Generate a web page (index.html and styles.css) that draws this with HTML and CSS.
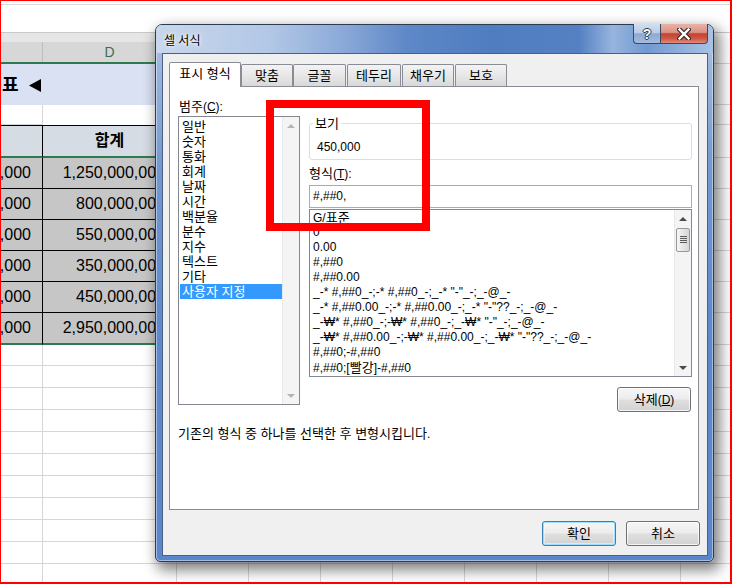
FILE: index.html
```html
<!DOCTYPE html>
<html lang="ko">
<head>
<meta charset="utf-8">
<title>셀 서식</title>
<link rel="stylesheet" href="styles.css">
</head>
<body>
<div class="screen">
  <div class="sheet">
    <div class="sheet-top"></div>
    <div class="sheet-gap"></div>
    <div class="row r-head">
      <div class="c hd"><div class="hd-in"></div></div>
      <div class="c hd"><div class="hd-in">D</div></div>
      <div class="c"></div><div class="c"></div><div class="c"></div><div class="c"></div><div class="c"></div><div class="c"></div><div class="c"></div><div class="c"></div>
    </div>
    <div class="row r-title">
      <div class="c ttl ttl-a"><span class="ttl-txt">표</span><svg class="ttl-arrow" width="12" height="13" viewBox="0 0 12 13"><path d="M0 6.5 L12 0 L12 13 Z" fill="#000"/></svg></div>
      <div class="c ttl"></div>
      <div class="c"></div><div class="c"></div><div class="c"></div><div class="c"></div><div class="c"></div><div class="c"></div><div class="c"></div><div class="c"></div>
    </div>
    <div class="row r-blank">
      <div class="c"></div><div class="c nb"></div>
      <div class="c"></div><div class="c"></div><div class="c"></div><div class="c"></div><div class="c"></div><div class="c"></div><div class="c"></div><div class="c"></div>
    </div>
    <div class="row r-th">
      <div class="c th th-a"></div>
      <div class="c th">합계</div>
      <div class="c"></div><div class="c"></div><div class="c"></div><div class="c"></div><div class="c"></div><div class="c"></div><div class="c"></div><div class="c"></div>
    </div>
    <div class="row r-data">
      <div class="c dv dv-a">300,000</div><div class="c dv">1,250,000,000</div>
      <div class="c"></div><div class="c"></div><div class="c"></div><div class="c"></div><div class="c"></div><div class="c"></div><div class="c"></div><div class="c"></div>
    </div>
    <div class="row r-data">
      <div class="c dv dv-a">200,000</div><div class="c dv">800,000,000</div>
      <div class="c"></div><div class="c"></div><div class="c"></div><div class="c"></div><div class="c"></div><div class="c"></div><div class="c"></div><div class="c"></div>
    </div>
    <div class="row r-data">
      <div class="c dv dv-a">150,000</div><div class="c dv">550,000,000</div>
      <div class="c"></div><div class="c"></div><div class="c"></div><div class="c"></div><div class="c"></div><div class="c"></div><div class="c"></div><div class="c"></div>
    </div>
    <div class="row r-data">
      <div class="c dv dv-a">100,000</div><div class="c dv">350,000,000</div>
      <div class="c"></div><div class="c"></div><div class="c"></div><div class="c"></div><div class="c"></div><div class="c"></div><div class="c"></div><div class="c"></div>
    </div>
    <div class="row r-data">
      <div class="c dv dv-a">120,000</div><div class="c dv">450,000,000</div>
      <div class="c"></div><div class="c"></div><div class="c"></div><div class="c"></div><div class="c"></div><div class="c"></div><div class="c"></div><div class="c"></div>
    </div>
    <div class="row r-data r-last">
      <div class="c dv dv-a">870,000</div><div class="c dv">2,950,000,000</div>
      <div class="c"></div><div class="c"></div><div class="c"></div><div class="c"></div><div class="c"></div><div class="c"></div><div class="c"></div><div class="c"></div>
    </div>
    <div class="row r-w r-w1"><div class="c"></div><div class="c"></div><div class="c"></div><div class="c"></div><div class="c"></div><div class="c"></div><div class="c"></div><div class="c"></div><div class="c"></div><div class="c"></div></div>
    <div class="row r-w"><div class="c"></div><div class="c"></div><div class="c"></div><div class="c"></div><div class="c"></div><div class="c"></div><div class="c"></div><div class="c"></div><div class="c"></div><div class="c"></div></div>
    <div class="row r-w"><div class="c"></div><div class="c"></div><div class="c"></div><div class="c"></div><div class="c"></div><div class="c"></div><div class="c"></div><div class="c"></div><div class="c"></div><div class="c"></div></div>
    <div class="row r-w"><div class="c"></div><div class="c"></div><div class="c"></div><div class="c"></div><div class="c"></div><div class="c"></div><div class="c"></div><div class="c"></div><div class="c"></div><div class="c"></div></div>
    <div class="row r-w"><div class="c"></div><div class="c"></div><div class="c"></div><div class="c"></div><div class="c"></div><div class="c"></div><div class="c"></div><div class="c"></div><div class="c"></div><div class="c"></div></div>
    <div class="row r-w"><div class="c"></div><div class="c"></div><div class="c"></div><div class="c"></div><div class="c"></div><div class="c"></div><div class="c"></div><div class="c"></div><div class="c"></div><div class="c"></div></div>
    <div class="row r-w"><div class="c"></div><div class="c"></div><div class="c"></div><div class="c"></div><div class="c"></div><div class="c"></div><div class="c"></div><div class="c"></div><div class="c"></div><div class="c"></div></div>
    <div class="row r-w"><div class="c"></div><div class="c"></div><div class="c"></div><div class="c"></div><div class="c"></div><div class="c"></div><div class="c"></div><div class="c"></div><div class="c"></div><div class="c"></div></div>
    <div class="row r-w"><div class="c"></div><div class="c"></div><div class="c"></div><div class="c"></div><div class="c"></div><div class="c"></div><div class="c"></div><div class="c"></div><div class="c"></div><div class="c"></div></div>
    <div class="row r-w"><div class="c"></div><div class="c"></div><div class="c"></div><div class="c"></div><div class="c"></div><div class="c"></div><div class="c"></div><div class="c"></div><div class="c"></div><div class="c"></div></div>
    <div class="row r-w"><div class="c"></div><div class="c"></div><div class="c"></div><div class="c"></div><div class="c"></div><div class="c"></div><div class="c"></div><div class="c"></div><div class="c"></div><div class="c"></div></div>
  </div>

  <div class="dialog">
    <div class="titlebar">
      <span class="title">셀 서식</span>
      <div class="caption-btns">
        <div class="cbtn help"><span class="qmark">?</span></div>
        <div class="cbtn close">
          <svg width="14" height="12" viewBox="0 0 14 12"><path d="M2.5 1.5 L11.5 10.5 M11.5 1.5 L2.5 10.5" stroke="#3b2a2a" stroke-width="4.6" stroke-linecap="square"/><path d="M2.5 1.5 L11.5 10.5 M11.5 1.5 L2.5 10.5" stroke="#ffffff" stroke-width="2.4" stroke-linecap="square"/></svg>
        </div>
      </div>
    </div>
    <div class="client">
      <div class="tabs">
        <div class="tab active t1"><span class="k">표시 형식</span></div>
        <div class="tab t2"><span class="k">맞춤</span></div>
        <div class="tab t3"><span class="k">글꼴</span></div>
        <div class="tab t4"><span class="k">테두리</span></div>
        <div class="tab t5"><span class="k">채우기</span></div>
        <div class="tab t6"><span class="k">보호</span></div>
      </div>
      <div class="panel">
        <div class="cols">
          <div class="col-left">
            <div class="lbl"><span class="k">범주</span>(<u>C</u>):</div>
            <div class="listbox cat">
              <div class="items">
                <div class="item"><span class="k">일반</span></div>
                <div class="item"><span class="k">숫자</span></div>
                <div class="item"><span class="k">통화</span></div>
                <div class="item"><span class="k">회계</span></div>
                <div class="item"><span class="k">날짜</span></div>
                <div class="item"><span class="k">시간</span></div>
                <div class="item"><span class="k">백분율</span></div>
                <div class="item"><span class="k">분수</span></div>
                <div class="item"><span class="k">지수</span></div>
                <div class="item"><span class="k">텍스트</span></div>
                <div class="item"><span class="k">기타</span></div>
                <div class="item sel"><span class="k">사용자 지정</span></div>
              </div>
              <div class="vscroll off">
                <span class="arrow up"></span>
                <span class="fill"></span>
                <span class="arrow down"></span>
              </div>
            </div>
          </div>
          <div class="col-right">
            <div class="group">
              <div class="legend"><span class="k">보기</span></div>
              <div class="sample">450,000</div>
            </div>
            <div class="lbl fmt-lbl"><span class="k">형식</span>(<u>T</u>):</div>
            <div class="input">#,##0,</div>
            <div class="listbox fmt">
              <div class="items">
                <div class="item">G/<span class="k">표준</span></div>
                <div class="item">0</div>
                <div class="item">0.00</div>
                <div class="item">#,##0</div>
                <div class="item">#,##0.00</div>
                <div class="item">_-* #,##0_-;-* #,##0_-;_-* "-"_-;_-@_-</div>
                <div class="item">_-* #,##0.00_-;-* #,##0.00_-;_-* "-"??_-;_-@_-</div>
                <div class="item">_-₩* #,##0_-;-₩* #,##0_-;_-₩* "-"_-;_-@_-</div>
                <div class="item">_-₩* #,##0.00_-;-₩* #,##0.00_-;_-₩* "-"??_-;_-@_-</div>
                <div class="item">#,##0;-#,##0</div>
                <div class="item">#,##0;[<span class="k">빨강</span>]-#,##0</div>
              </div>
              <div class="vscroll">
                <span class="arrow up"></span>
                <span class="thumb"><svg width="7" height="8" viewBox="0 0 7 8"><path d="M0 0.5H7M0 2.5H7M0 4.5H7M0 6.5H7" stroke="#5b5b5b" stroke-width="1"/></svg></span>
                <span class="fill"></span>
                <span class="arrow down"></span>
              </div>
            </div>
            <div class="del-row"><button class="btn"><span class="k">삭제</span>(<u>D</u>)</button></div>
          </div>
        </div>
        <p class="desc"><span class="k">기존의 형식 중 하나를 선택한 후 변형시킵니다</span>.</p>
      </div>
      <div class="footer">
        <button class="btn default"><span class="k">확인</span></button>
        <button class="btn"><span class="k">취소</span></button>
      </div>
    </div>
  </div>

  <div class="mark"></div>
  <div class="screen-border"></div>
</div>
</body>
</html>
```

FILE: styles.css
```css
* { box-sizing: border-box; }
html, body { margin: 0; padding: 0; }
body {
  width: 732px;
  height: 584px;
  overflow: hidden;
  background: #ffffff;
  font-family: "Liberation Sans", "Noto Sans CJK KR", sans-serif;
}
.screen {
  position: relative;
  width: 732px;
  height: 584px;
  overflow: hidden;
  background: #ffffff;
}
.screen-border {
  position: absolute;
  inset: 0;
  border: solid #ff0000;
  border-width: 1px 2px 2px 1px;
  pointer-events: none;
}

/* ---------- spreadsheet ---------- */
.sheet { width: 753px; color: #000; }
.sheet-top { height: 5px; border-bottom: 1px solid #dadada; }
.sheet-gap { height: 28px; border-bottom: 1px solid #c9c9c9; }
.row {
  display: grid;
  grid-template-columns: 43px 134px repeat(8, 72px);
}
.c {
  border-right: 1px solid #d6d6d6;
  border-bottom: 1px solid #d6d6d6;
  overflow: hidden;
  white-space: nowrap;
}
.r-head { height: 31px; }
.hd {
  background: #e6e6e6;
  padding-top: 9px;
  border-right: none;
  border-bottom: 2px solid #2e7a4e;
}
.hd-in {
  height: 20px;
  background: #d7d7d7;
  border-right: 1px solid #bdbdbd;
  text-align: center;
  line-height: 20px;
  font-size: 14px;
  color: #3e6c4f;
}
.r-title { height: 41px; }
.ttl { background: #d9e1f2; border-right: none; border-bottom: none; }
.ttl-a { display: flex; align-items: center; padding-left: 2px; }
.ttl-txt {
  font-weight: 700;
  font-size: 18px;
  line-height: 20px;
}
.ttl-arrow { margin-left: 10px; margin-top: 2px; flex: none; }
.r-blank { height: 20px; }
.nb { border-bottom: none; }
.r-th { height: 33px; }
.th {
  background: #d6dce4;
  border-top: 1px solid #000;
  border-bottom: 2px solid #2e7a4e;
  border-right: 1px solid #000;
  text-align: center;
  font-weight: 700;
  font-size: 16px;
  line-height: 30px;
}
.r-data { height: 31px; }
.r-last { height: 32px; }
.dv {
  background: #c6c6c6;
  border-bottom: 1px solid #000;
  border-right: 1px solid #000;
  display: flex;
  justify-content: flex-end;
  align-items: center;
  padding-right: 11px;
  font-size: 16px;
}
.r-last .dv { border-bottom: 2px solid #2e7a4e; }
.r-w { height: 22px; }
.r-w1 { height: 21px; }

/* ---------- dialog ---------- */
.dialog {
  position: absolute;
  left: 155px;
  top: 24px;
  width: 559px;
  height: 538px;
  border: 1px solid #2c3a52;
  border-radius: 7px 7px 5px 5px;
  padding: 0 5px 5px 6px;
  background: linear-gradient(180deg, #b9cbe6 0, #9ab6de 40px, #7499d0 140px, #5e89cc 300px, #5a86cc 100%);
  box-shadow: 4px 6px 14px 2px rgba(0, 0, 0, 0.5), inset 0 0 0 1px rgba(255, 255, 255, 0.45);
  font-family: "Liberation Sans", "Noto Sans CJK KR", sans-serif;
  font-size: 12px;
  color: #000;
}
.k { font-size: 13px; }
.titlebar {
  display: flex;
  height: 28px;
  margin: 0 -5px 0 -6px;
  padding: 0 5px 0 8px;
  border-radius: 6px 6px 0 0;
  background: linear-gradient(90deg, #c8d7ec 0%, #b3c8e6 20%, #8dabd9 33%, #5e88c7 45%, #4f7dc0 60%, #5581c3 76%, #97b5de 82%, #7199d1 88%, #a9c2e5 100%);
}
.title {
  padding-top: 9px;
  line-height: 14px;
  font-size: 12px;
  text-shadow: 0 0 5px #ffffff, 0 0 3px #ffffff;
}
.caption-btns {
  margin-left: auto;
  margin-top: -1px;
  display: flex;
  height: 20px;
}
.cbtn {
  height: 20px;
  border: 1px solid #3a4962;
  border-top: none;
  display: flex;
  align-items: center;
  justify-content: center;
}
.help {
  width: 27px;
  border-right: none;
  border-radius: 0 0 0 4px;
  background: linear-gradient(180deg, #d2dff0 0%, #bacde6 45%, #8ea9d0 52%, #a4bcdc 100%);
}
.qmark {
  font-family: "Liberation Sans", sans-serif;
  font-weight: 700;
  font-size: 14px;
  line-height: 14px;
  color: #ffffff;
  text-shadow: 1px 0 #2b3852, -1px 0 #2b3852, 0 1px #2b3852, 0 -1px #2b3852;
}
.close {
  width: 48px;
  border-radius: 0 0 4px 0;
  background: linear-gradient(180deg, #e8b2a8 0%, #dc9283 44%, #c5412f 52%, #cf5a46 78%, #de8d7d 100%);
}
.client {
  height: 503px;
  border: 1px solid #4d5f80;
  background: #f0f0f0;
  padding: 8px 7px 0 6px;
}
.tabs {
  display: flex;
  align-items: flex-end;
  height: 24px;
  position: relative;
  z-index: 1;
}
.tab {
  height: 22px;
  border: 1px solid #898c95;
  border-bottom: none;
  border-radius: 2px 2px 0 0;
  background: linear-gradient(180deg, #f3f3f3 0%, #e7e7e7 50%, #d9d9d9 100%);
  text-align: center;
  padding-top: 3px;
  line-height: 16px;
  white-space: nowrap;
}
.tab.active {
  height: 25px;
  margin-bottom: -1px;
  background: #ffffff;
  padding-top: 3px;
}
.t1 { width: 72px; }
.t2 { width: 52px; }
.t3 { width: 53px; }
.t4 { width: 54px; margin-left: 1px; }
.t5 { width: 52px; margin-left: 1px; }
.t6 { width: 52px; margin-left: 1px; }
.panel {
  width: 530px;
  height: 424px;
  border: 1px solid #898c95;
  background: #ffffff;
  padding: 13px 6px 0 8px;
}
.cols {
  display: grid;
  grid-template-columns: 122px 383px;
  column-gap: 9px;
  align-items: start;
}
.lbl { height: 14px; line-height: 14px; padding-left: 1px; white-space: nowrap; }
.listbox {
  display: flex;
  border: 1px solid #828790;
  background: #ffffff;
}
.cat { height: 289px; margin-top: 2px; }
.items { flex: 1; min-width: 0; overflow: hidden; padding-top: 2px; }
.cat .items { padding-left: 1px; }
.item {
  height: 15px;
  line-height: 15px;
  padding-left: 2px;
  white-space: nowrap;
}
.item.sel { background: #3399ff; color: #ffffff; }
.vscroll {
  width: 17px;
  flex: none;
  display: flex;
  flex-direction: column;
  background: #f4f4f4;
  border-left: 1px solid #e8e8e8;
}
.vscroll .fill { flex: 1; }
.arrow {
  height: 17px;
  flex: none;
  display: flex;
  align-items: center;
  justify-content: center;
}
.arrow.up::before {
  content: "";
  border-left: 4px solid transparent;
  border-right: 4px solid transparent;
  border-bottom: 4px solid #4a4a4a;
}
.arrow.down::before {
  content: "";
  border-left: 4px solid transparent;
  border-right: 4px solid transparent;
  border-top: 4px solid #4a4a4a;
}
.off .arrow.up::before { border-bottom-color: #b4b4b4; }
.off .arrow.down::before { border-top-color: #b4b4b4; }
.thumb {
  height: 24px;
  margin: 1px 1px 0 1px;
  border: 1px solid #989898;
  border-radius: 2px;
  background: linear-gradient(90deg, #f6f6f6 0%, #e6e6e6 50%, #d6d6d6 100%);
  display: flex;
  align-items: center;
  justify-content: center;
}
.group {
  margin-top: 23px;
  height: 37px;
  border: 1px solid #d5dfe5;
  border-radius: 3px;
}
.legend {
  display: table;
  height: 14px;
  margin: -7px 0 0 3px;
  padding: 0 2px;
  background: #ffffff;
  line-height: 14px;
}
.sample { margin-top: 9px; padding-left: 7px; line-height: 14px; }
.fmt-lbl { margin-top: 7px; padding-left: 0; }
.input {
  margin-top: 4px;
  height: 23px;
  border: 1px solid #a9abb0;
  padding: 0 3px;
  line-height: 21px;
  background: #ffffff;
}
.fmt { margin-top: 1px; height: 168px; }
.fmt .items { padding: 0 0 0 1px; }
.del-row {
  display: flex;
  justify-content: flex-end;
  margin-top: 10px;
  padding-right: 1px;
}
.btn {
  width: 74px;
  height: 25px;
  padding: 0;
  border: 1px solid #707070;
  border-radius: 3px;
  background: linear-gradient(180deg, #f6f6f6 0%, #ececec 48%, #dfdfdf 52%, #d2d2d2 100%);
  box-shadow: inset 0 0 0 1px rgba(255, 255, 255, 0.75);
  font-family: "Liberation Sans", "Noto Sans CJK KR", sans-serif;
  font-size: 12px;
  line-height: 14px;
  color: #000;
}
.btn.default {
  border-color: #3c7fb1;
  box-shadow: inset 0 0 0 1px #9ee0fb, inset 0 0 0 2px rgba(255, 255, 255, 0.4);
}
.desc { margin: 15px 0 0; height: 14px; line-height: 14px; white-space: nowrap; }
.footer {
  display: flex;
  justify-content: flex-end;
  gap: 10px;
  margin-top: 11px;
}

/* ---------- red annotation ---------- */
.mark {
  position: absolute;
  left: 266px;
  top: 100px;
  width: 164px;
  height: 131px;
  border: 8px solid #ff0000;
}
```
